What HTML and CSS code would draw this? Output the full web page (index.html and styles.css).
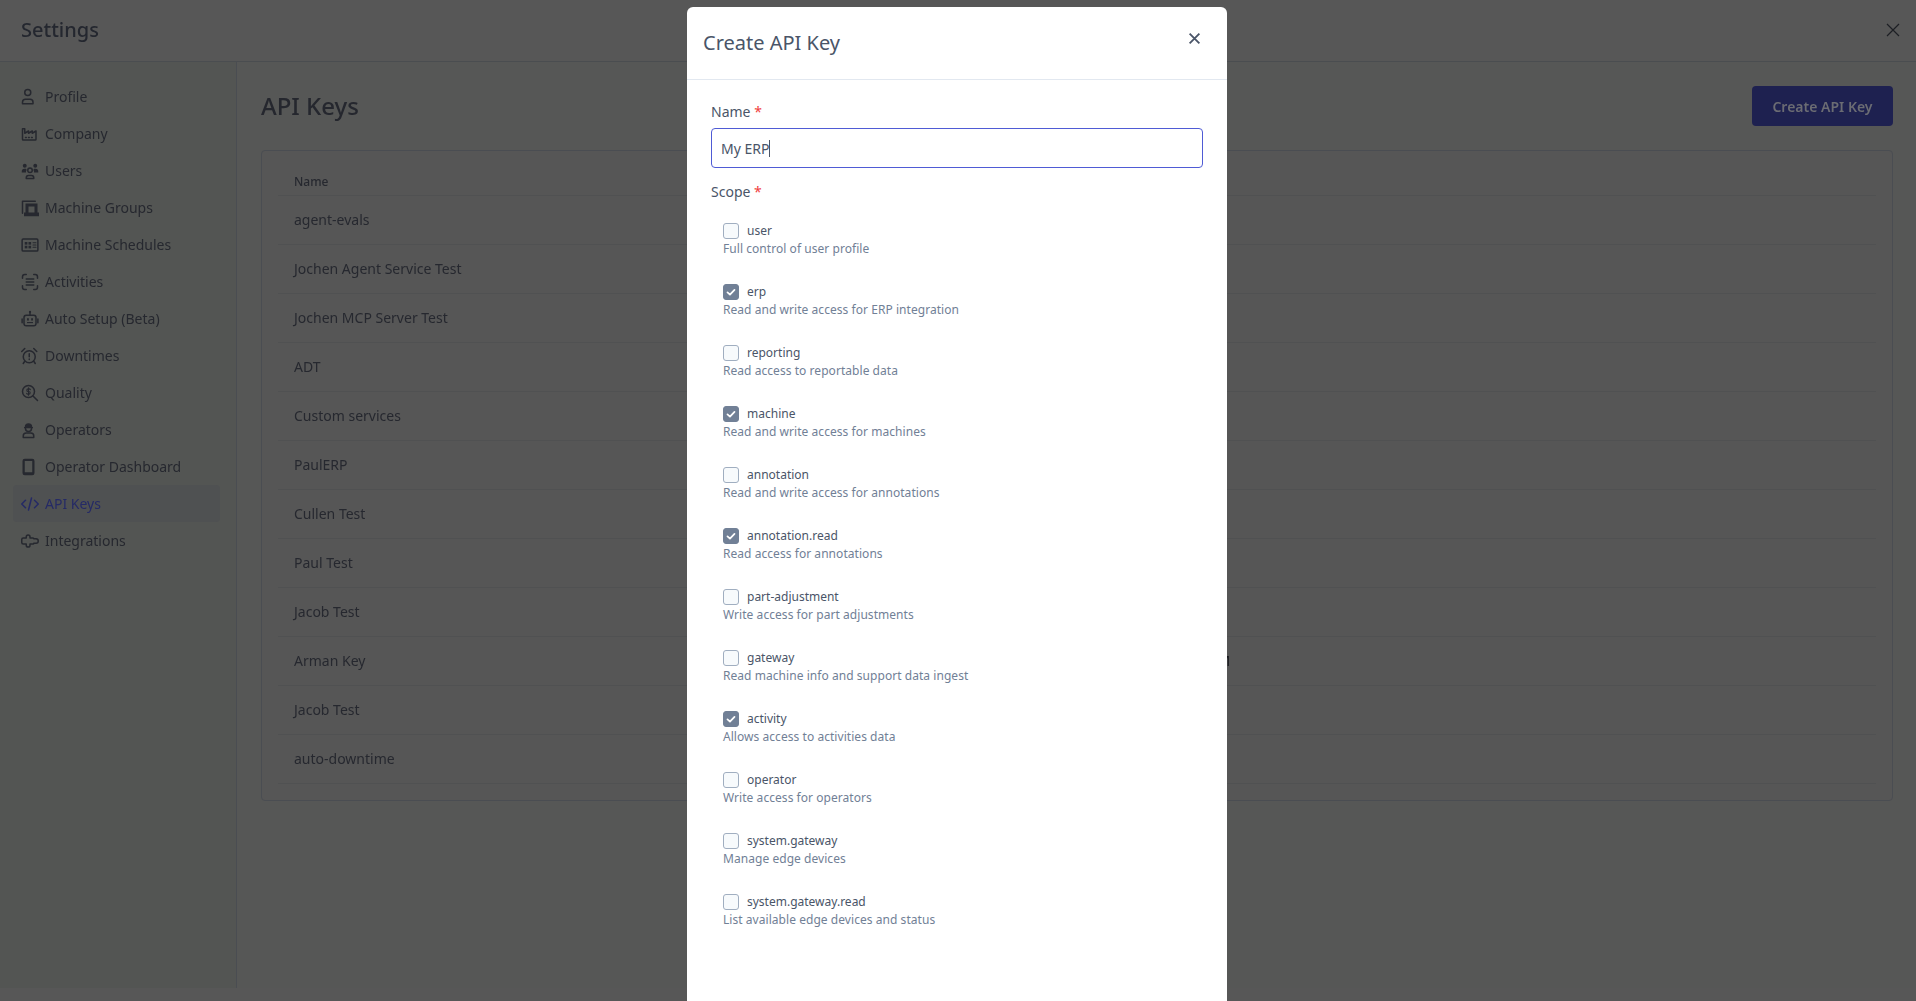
FILE: index.html
```html
<!DOCTYPE html>
<html lang="en">
<head>
    <meta charset="UTF-8">
    <title>Settings - API Keys</title>
    <link rel="stylesheet" href="styles.css">
</head>
<body>
    <div class="app">
        <header class="topbar">
            <h1 class="topbar-title">Settings</h1>
            <svg class="topbar-close" viewBox="0 0 14 14"><path d="M1 1l12 12M13 1L1 13"/></svg>
        </header>
        <div class="layout">
            <nav class="sidebar">
                <a class="nav-item">
                    <svg class="nav-icon" viewBox="0 0 24 24"><circle cx="9" cy="6" r="4"/><path d="M2 21v-2a4 4 0 0 1 4-4h6a4 4 0 0 1 4 4v2z"/></svg>
                    Profile
                </a>
                <a class="nav-item">
                    <svg class="nav-icon" viewBox="0 0 24 24"><path d="M2 5h3v6l5-3v3l5-3v3l5-3v11a1 1 0 0 1-1 1H3a1 1 0 0 1-1-1z"/><path d="M6 16.500h1M10 16.500h1M14 16.500h1"/></svg>
                    Company
                </a>
                <a class="nav-item">
                    <svg class="nav-icon" viewBox="0 0 24 24"><circle cx="12" cy="11" r="3"/><path d="M7 22v-1a3 3 0 0 1 3-3h4a3 3 0 0 1 3 3v1z"/><g class="icon-solid"><circle cx="5" cy="5" r="2.600"/><circle cx="19" cy="5" r="2.600"/><path d="M1 14v-1.500A3.500 3.500 0 0 1 4.500 9h2a3.500 3.500 0 0 1 1 1.500 4 4 0 0 0-.8 3.500zM23 14v-1.500A3.500 3.500 0 0 0 19.500 9h-2a3.500 3.500 0 0 0-1 1.500 4 4 0 0 1 .8 3.500z"/></g></svg>
                    Users
                </a>
                <a class="nav-item">
                    <svg class="nav-icon" viewBox="0 0 24 24"><path d="M2 19V3h17"/><g class="icon-solid"><path d="M6 6h16v13H6z"/><path d="M4 18h20v5H4z"/></g><path class="icon-cut" d="M10 10h8v8h-8z"/></svg>
                    Machine Groups
                </a>
                <a class="nav-item">
                    <svg class="nav-icon" viewBox="0 0 24 24"><rect x="1.500" y="4" width="21" height="16" rx="1.500"/><g class="icon-solid"><rect x="5" y="8" width="3.500" height="3.500"/><rect x="10" y="8" width="3.500" height="3.500"/><rect x="5" y="13" width="3.500" height="3.500"/><rect x="10" y="13" width="3.500" height="3.500"/></g><path class="icon-thin" d="M16 9h4M16 12h4M16 15h4"/></svg>
                    Machine Schedules
                </a>
                <a class="nav-item">
                    <svg class="nav-icon" viewBox="0 0 24 24"><path d="M2 7V5a3 3 0 0 1 3-3h2M17 2h2a3 3 0 0 1 3 3v2M22 17v2a3 3 0 0 1-3 3h-2M7 22H5a3 3 0 0 1-3-3v-2"/><path d="M7 8h10M7 12h10M7 16h10"/></svg>
                    Activities
                </a>
                <a class="nav-item">
                    <svg class="nav-icon" viewBox="0 0 24 24"><rect x="4" y="7" width="16" height="14" rx="3"/><path d="M12 7V3M1.500 12v5M22.500 12v5"/><circle class="icon-solid" cx="12" cy="2.500" r="1.500"/><g class="icon-solid"><rect x="8" y="11" width="2.500" height="3"/><rect x="13.500" y="11" width="2.500" height="3"/><rect x="8" y="16" width="8" height="1.500"/></g></svg>
                    Auto Setup (Beta)
                </a>
                <a class="nav-item">
                    <svg class="nav-icon" viewBox="0 0 24 24"><circle cx="11" cy="13" r="8"/><path d="M11 9v4M11 16v.5M1 6l4-4M21 6l-4-4M5 19l-2 3M17 19l2 3"/></svg>
                    Downtimes
                </a>
                <a class="nav-item">
                    <svg class="nav-icon" viewBox="0 0 24 24"><circle cx="10" cy="10" r="8"/><path d="M16 16l6 6"/><path class="icon-thin" d="M12.500 7.500A2 2 0 0 0 10.500 6.500h-1a1.700 1.700 0 0 0 0 3.500h1a1.700 1.700 0 0 1 0 3.500h-1a2 2 0 0 1-2-1M10 5v10"/></svg>
                    Quality
                </a>
                <a class="nav-item">
                    <svg class="nav-icon" viewBox="0 0 24 24"><path class="icon-solid" d="M5 8a5 5 0 0 1 10 0h1v1.500H4V8z"/><path d="M6 10a4 4 0 0 0 8 0"/><path d="M3 22v-2a4 4 0 0 1 4-4h6a4 4 0 0 1 4 4v2z"/></svg>
                    Operators
                </a>
                <a class="nav-item">
                    <svg class="nav-icon" viewBox="0 0 24 24"><path class="icon-solid" d="M5 1h10a3 3 0 0 1 3 3v16a3 3 0 0 1-3 3H5a3 3 0 0 1-3-3V4a3 3 0 0 1 3-3z"/><path class="icon-cut" d="M5 4h10v15H5z"/></svg>
                    Operator Dashboard
                </a>
                <a class="nav-item nav-item-active">
                    <svg class="nav-icon" viewBox="0 0 24 24"><path d="M6 7l-5 5 5 5M18 7l5 5-5 5M14 4l-4 16"/></svg>
                    API Keys
                </a>
                <a class="nav-item">
                    <svg class="nav-icon" viewBox="0 0 24 24"><path d="M3 8h4V6.500a2.500 2.500 0 0 1 5 0V8h4a1 1 0 0 1 1 1h3a3 3 0 0 1 3 3 3 3 0 0 1-3 3h-3a1 1 0 0 1-1 1h-4v1.500a2.500 2.500 0 0 1-5 0V16H3a2 2 0 0 1-2-2v-4a2 2 0 0 1 2-2z"/></svg>
                    Integrations
                </a>
            </nav>
            <main class="content">
                <div class="content-head">
                    <h2 class="content-title">API Keys</h2>
                    <button class="create-btn">Create API Key</button>
                </div>
                <section class="card">
                    <div class="table-head">Name</div>
                    <div class="table-row">agent-evals</div>
                    <div class="table-row">Jochen Agent Service Test</div>
                    <div class="table-row">Jochen MCP Server Test</div>
                    <div class="table-row">ADT</div>
                    <div class="table-row">Custom services</div>
                    <div class="table-row">PaulERP</div>
                    <div class="table-row">Cullen Test</div>
                    <div class="table-row">Paul Test</div>
                    <div class="table-row">Jacob Test</div>
                    <div class="table-row">Arman Key<span class="table-cell-hidden">M</span></div>
                    <div class="table-row">Jacob Test</div>
                    <div class="table-row">auto-downtime</div>
                </section>
            </main>
        </div>
    </div>

    <div class="overlay">
        <div class="modal">
            <div class="modal-head">
                <h3 class="modal-title">Create API Key</h3>
                <svg class="modal-close" viewBox="0 0 12 12"><path d="M1.500 1.500l9 9M10.500 1.500l-9 9"/></svg>
            </div>
            <form class="modal-body">
                <label class="field-label">Name <span class="req">*</span></label>
                <div class="text-input">My ERP<span class="caret"></span></div>
                <label class="field-label field-label-scope">Scope <span class="req">*</span></label>

                <div class="scope">
                    <div class="scope-row"><span class="check"></span>user</div>
                    <div class="scope-desc">Full control of user profile</div>
                </div>
                <div class="scope">
                    <div class="scope-row"><span class="check check-on"><svg viewBox="0 0 16 16"><path d="M4 8.500l2.800 2.500L12 5.500"/></svg></span>erp</div>
                    <div class="scope-desc">Read and write access for ERP integration</div>
                </div>
                <div class="scope">
                    <div class="scope-row"><span class="check"></span>reporting</div>
                    <div class="scope-desc">Read access to reportable data</div>
                </div>
                <div class="scope">
                    <div class="scope-row"><span class="check check-on"><svg viewBox="0 0 16 16"><path d="M4 8.500l2.800 2.500L12 5.500"/></svg></span>machine</div>
                    <div class="scope-desc">Read and write access for machines</div>
                </div>
                <div class="scope">
                    <div class="scope-row"><span class="check"></span>annotation</div>
                    <div class="scope-desc">Read and write access for annotations</div>
                </div>
                <div class="scope">
                    <div class="scope-row"><span class="check check-on"><svg viewBox="0 0 16 16"><path d="M4 8.500l2.800 2.500L12 5.500"/></svg></span>annotation.read</div>
                    <div class="scope-desc">Read access for annotations</div>
                </div>
                <div class="scope">
                    <div class="scope-row"><span class="check"></span>part-adjustment</div>
                    <div class="scope-desc">Write access for part adjustments</div>
                </div>
                <div class="scope">
                    <div class="scope-row"><span class="check"></span>gateway</div>
                    <div class="scope-desc">Read machine info and support data ingest</div>
                </div>
                <div class="scope">
                    <div class="scope-row"><span class="check check-on"><svg viewBox="0 0 16 16"><path d="M4 8.500l2.800 2.500L12 5.500"/></svg></span>activity</div>
                    <div class="scope-desc">Allows access to activities data</div>
                </div>
                <div class="scope">
                    <div class="scope-row"><span class="check"></span>operator</div>
                    <div class="scope-desc">Write access for operators</div>
                </div>
                <div class="scope">
                    <div class="scope-row"><span class="check"></span>system.gateway</div>
                    <div class="scope-desc">Manage edge devices</div>
                </div>
                <div class="scope">
                    <div class="scope-row"><span class="check"></span>system.gateway.read</div>
                    <div class="scope-desc">List available edge devices and status</div>
                </div>
            </form>
        </div>
    </div>
</body>
</html>
```

FILE: styles.css
```css
* {
    box-sizing: border-box;
}
html, body {
    margin: 0;
    height: 100%;
    overflow: hidden;
}
body {
    background: #575757;
    font-family: 'Noto Sans', sans-serif;
    color: #25272e;
}

/* dimmed page behind the modal */
.app {
    height: 100%;
    filter: blur(0.3px);
}
.topbar {
    height: 62px;
    display: flex;
    align-items: center;
    justify-content: space-between;
    padding: 0 16px 2px 21px;
    border-bottom: 1px solid #4a4d50;
}
.topbar-title {
    margin: 0;
    font-size: 20px;
    font-weight: 500;
    color: #24272f;
}
.topbar-close {
    width: 14px;
    height: 14px;
    fill: none;
    stroke: #1d1f24;
    stroke-width: 1.2;
}
.layout {
    display: flex;
    background: #565756;
}
.sidebar {
    width: 237px;
    height: 926px;
    padding: 16px 16px 0 13px;
    background: #535553;
    border-right: 1px solid #4a4d52;
}
.nav-item {
    height: 37px;
    display: flex;
    align-items: center;
    gap: 6px;
    padding-left: 8px;
    border-radius: 4px;
    font-size: 14px;
    color: #26282f;
}
.nav-item-active {
    background: #4f5152;
    color: #252a66;
}
.nav-icon {
    width: 18px;
    height: 18px;
    flex: none;
    fill: none;
    stroke: currentColor;
    stroke-width: 2;
    stroke-linecap: round;
    stroke-linejoin: round;
}
.icon-solid {
    fill: currentColor;
    stroke: none;
}
.icon-cut {
    fill: #535553;
    stroke: none;
}
.icon-thin {
    stroke-width: 1.4;
}
.content {
    flex: 1;
    padding: 24px 23px 0 24px;
}
.content-head {
    height: 40px;
    display: flex;
    align-items: center;
    justify-content: space-between;
    margin-bottom: 24px;
}
.content-title {
    margin: 0 0 2px;
    font-size: 24px;
    font-weight: 500;
    color: #25272e;
}
.create-btn {
    width: 141px;
    height: 40px;
    border: none;
    border-radius: 4px;
    background: #1e2150;
    color: #6b6c73;
    font-family: inherit;
    font-size: 14px;
    font-weight: 600;
}
.card {
    height: 651px;
    padding: 16px 16px 0;
    background: #565656;
    border: 1px solid #4a4d52;
    border-radius: 4px;
}
.table-head {
    height: 29px;
    padding: 0 16px;
    display: flex;
    align-items: center;
    font-size: 12px;
    font-weight: 500;
    border-bottom: 1px solid #505152;
    color: #26282f;
}
.table-row {
    height: 49px;
    padding: 0 16px 2px;
    display: flex;
    align-items: center;
    font-size: 14px;
    border-bottom: 1px solid #505152;
    color: #26282f;
}
.table-cell-hidden {
    margin-left: 852px;
    font-size: 14px;
    color: #17181c;
}

/* modal */
.overlay {
    position: fixed;
    inset: 0;
    overflow: hidden;
}
.modal {
    width: 540px;
    height: 1100px;
    margin: 7px 0 0 687px;
    background: #fff;
    border-radius: 6px 6px 0 0;
}
.modal-head {
    height: 73px;
    padding: 0 26px 2px 16px;
    display: flex;
    align-items: center;
    justify-content: space-between;
    border-bottom: 1px solid #e2e8f0;
}
.modal-title {
    margin: 0;
    font-size: 20px;
    font-weight: 400;
    color: #4a5568;
}
.modal-close {
    width: 13px;
    height: 13px;
    margin-bottom: 7px;
    fill: none;
    stroke: #4a5568;
    stroke-width: 1.7;
}
.modal-body {
    padding: 22px 24px 0;
}
.field-label {
    display: block;
    height: 20px;
    font-size: 14px;
    line-height: 20px;
    color: #4a5568;
}
.field-label-scope {
    margin-top: 14px;
    margin-bottom: 20px;
}
.req {
    color: #f03e3e;
}
.text-input {
    height: 40px;
    margin-top: 6px;
    padding: 0 9px;
    display: flex;
    align-items: center;
    border: 1px solid #4f5bd5;
    border-radius: 4px;
    font-size: 14px;
    color: #4a5568;
}
.caret {
    width: 1px;
    height: 17px;
    background: #4a5568;
}
.scope {
    height: 61px;
    padding-left: 12px;
}
.scope-row {
    height: 18px;
    display: flex;
    align-items: center;
    gap: 8px;
    padding-bottom: 2px;
    font-size: 12px;
    color: #4a5568;
}
.scope-desc {
    height: 18px;
    line-height: 18px;
    font-size: 12px;
    letter-spacing: 0.05px;
    color: #718096;
}
.check {
    width: 16px;
    height: 16px;
    flex: none;
    margin-top: 2px;
    background: #f7fafc;
    border: 1px solid #a0aec0;
    border-radius: 3px;
}
.check-on {
    background: #718096;
    border-color: #718096;
}
.check-on svg {
    display: block;
    width: 14px;
    height: 14px;
    fill: none;
    stroke: #fff;
    stroke-width: 2;
    stroke-linecap: round;
    stroke-linejoin: round;
}
```
